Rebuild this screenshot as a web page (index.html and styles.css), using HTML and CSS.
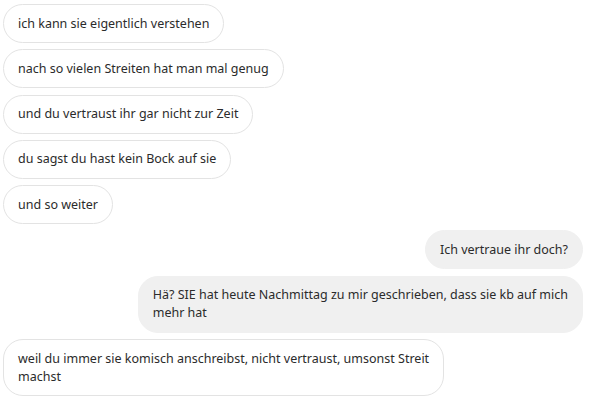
FILE: index.html
```html
<!DOCTYPE html>
<html lang="de">
<head>
    <meta charset="UTF-8">
    <meta name="viewport" content="width=device-width, initial-scale=1.0">
    <title>Chat</title>
    <link rel="stylesheet" href="styles.css">
</head>
<body>
    <div id="chat">
        <div class="msg them">ich kann sie eigentlich verstehen</div>
        <div class="msg them">nach so vielen Streiten hat man mal genug</div>
        <div class="msg them">und du vertraust ihr gar nicht zur Zeit</div>
        <div class="msg them">du sagst du hast kein Bock auf sie</div>
        <div class="msg them">und so weiter</div>
        <div class="msg me">Ich vertraue ihr doch?</div>
        <div class="msg me">Hä? SIE hat heute Nachmittag zu mir geschrieben, dass sie kb auf mich<br>mehr hat</div>
        <div class="msg them">weil du immer sie komisch anschreibst, nicht vertraust, umsonst Streit<br>machst</div>
    </div>
</body>
</html>
```

FILE: styles.css
```css
/* Chat bubbles */
body {
    margin: 0;
    background: #fff;
    font-family: "Noto Sans", Arial, sans-serif;
    font-size: 12.5px;
    color: #2b2b2b;
}
#chat {
    display: flex;
    flex-direction: column;
    gap: 6.3px;
    padding: 4px 7px 0 3px;
}
.msg {
    align-self: flex-start;
    white-space: nowrap;
    line-height: 18px;
    padding: 9.5px 14px;
    border-radius: 20px;
}
.them {
    background: #fff;
    border: 1px solid #e3e3e3;
}
.me {
    align-self: flex-end;
    background: #f0f0f0;
    border: 1px solid #f0f0f0;
}
```
